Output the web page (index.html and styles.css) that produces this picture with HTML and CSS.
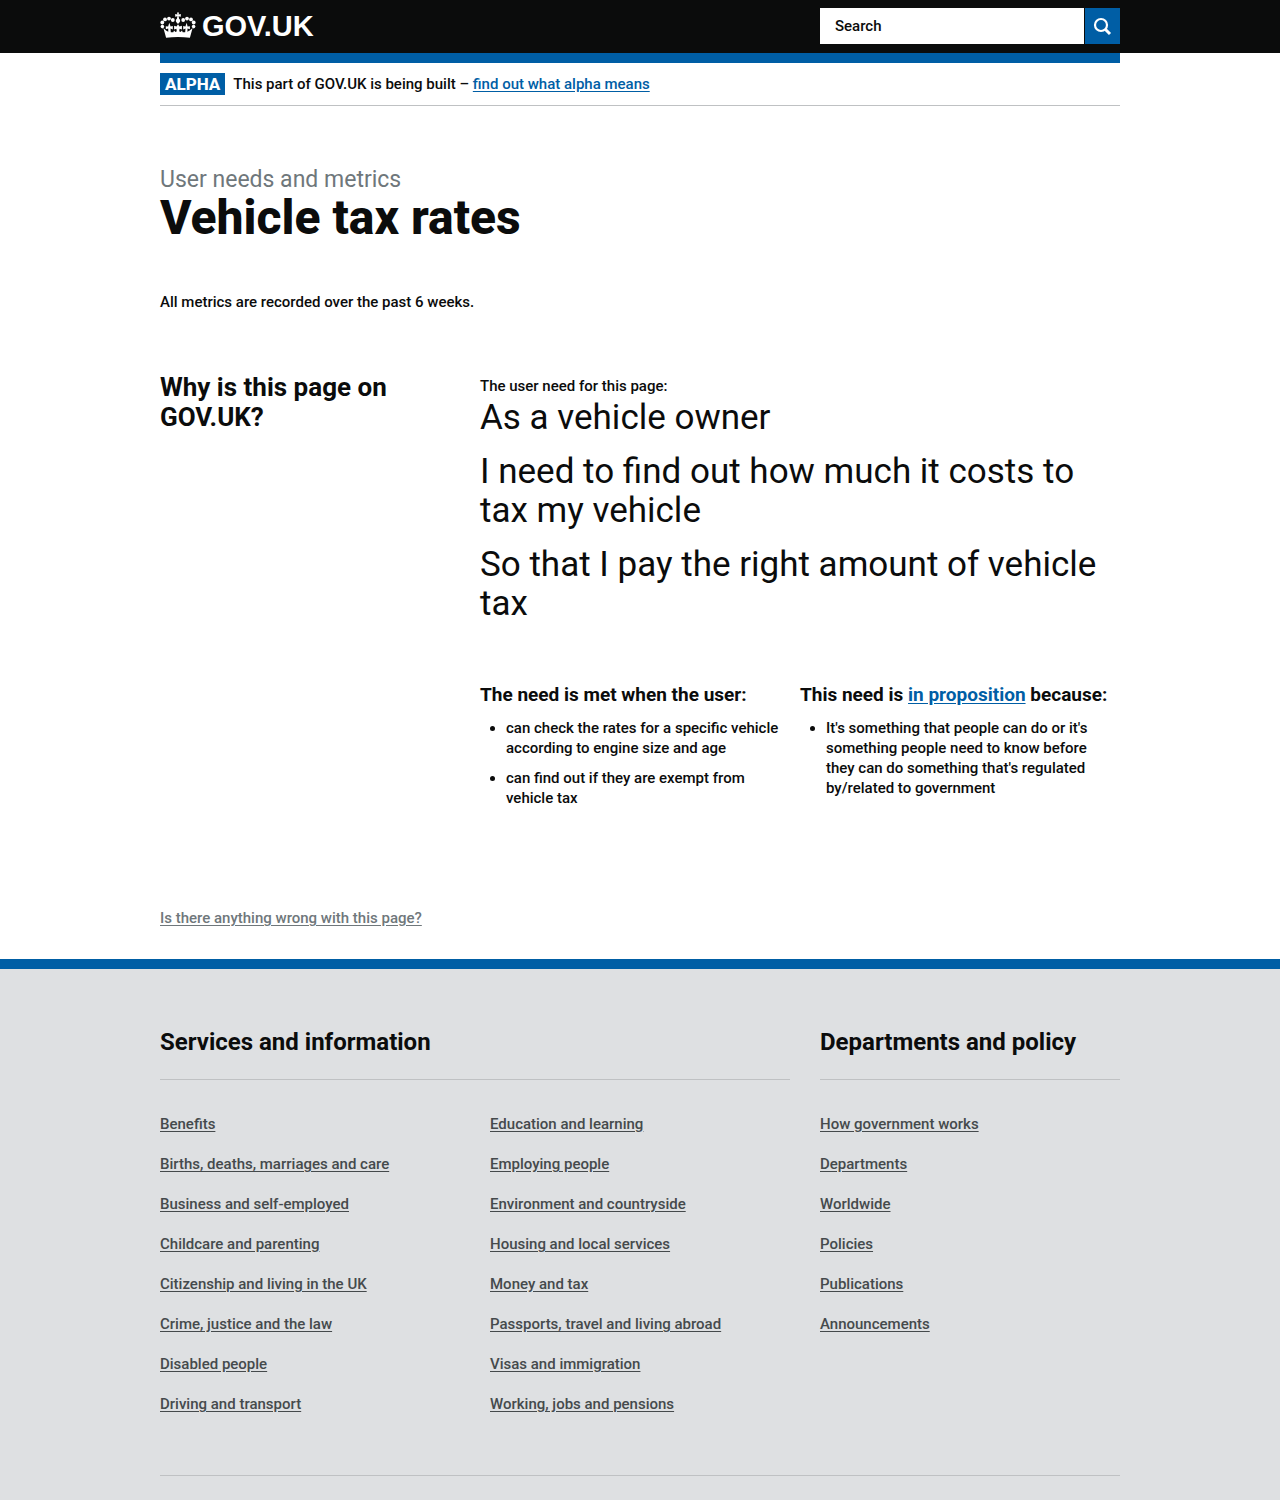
FILE: index.html
```html
<!DOCTYPE html>
<html lang="en">
<head>
<meta charset="utf-8">
<title>Vehicle tax rates - GOV.UK</title>
<meta name="viewport" content="width=device-width, initial-scale=1">
<link rel="stylesheet" href="styles.css">
</head>
<body>
<header class="site-header">
  <div class="wrap site-header__inner">
    <a class="logo" href="#">
      <svg class="logo__crown" viewBox="0 0 36 28" width="36" height="28" aria-hidden="true">
        <g fill="#fff">
          <path d="M17 .6h2l-.4 2 2.200-.5v2.600l-2.200-.5.5 2.600c1.300.6 1.500 2.700.3 3.700L18 12l-1.400-1.500c-1.200-1-1-3.100.3-3.700l.5-2.600-2.200.5V2.100l2.200.5z"/>
          <circle cx="12.800" cy="8" r="1.900"/><circle cx="9" cy="6.600" r="1.900"/><circle cx="5" cy="7.400" r="1.900"/><circle cx="2.300" cy="10.500" r="1.900"/><circle cx="2.400" cy="14.600" r="1.800"/>
          <circle cx="23.200" cy="8" r="1.900"/><circle cx="27" cy="6.600" r="1.900"/><circle cx="31" cy="7.400" r="1.900"/><circle cx="33.700" cy="10.500" r="1.900"/><circle cx="33.600" cy="14.600" r="1.800"/>
          <path d="m9.300 10.800 1.300 3.800 2.200-.6v3.400l-2.300-.8.3 3.600h2.500l.7-1.600 1.500 1.300 1.300-.6-.4-2.600-2.300.7v-3.600l2.400.7L18 12.200l1.500 2.300 2.400-.7v3.600l-2.300-.7-.4 2.600 1.300.6 1.500-1.300.7 1.600h2.500l.3-3.600-2.300.8V14l2.200.6 1.300-3.800.9 3.600 2.300-.2v3l-2.400-.8-.1 3.300 2.300-1.300 2.900-2.500-2.700 9.800c-7.800-1-16-1-23.800 0l-2.700-9.800L6 18.400l2.300 1.300-.1-3.300-2.400.8v-3l2.300.2z"/>
        </g>
      </svg>
      <span class="logo__text">GOV.UK</span>
    </a>
    <form class="search" role="search">
      <input class="search__input" type="search" aria-label="Search" placeholder="Search">
      <button class="search__button" type="submit" aria-label="Search">
        <svg viewBox="0 0 36 36" width="36" height="36" fill="none" stroke="#fff" aria-hidden="true"><circle cx="16" cy="17" r="6" stroke-width="2.200"/><path d="m20.500 21.500 4.500 4.500" stroke-width="3"/></svg>
      </button>
    </form>
  </div>
</header>
<div class="wrap">
  <div class="phase">
    <strong class="phase__tag">ALPHA</strong>
    <span>This part of GOV.UK is being built – <a href="#">find out what alpha means</a></span>
  </div>
  <main>
    <header class="title">
      <p class="title__context">User needs and metrics</p>
      <h1 class="title__heading">Vehicle tax rates</h1>
    </header>
    <p>All metrics are recorded over the past 6 weeks.</p>
    <section class="why">
      <h2 class="why__heading">Why is this page on GOV.UK?</h2>
      <div class="why__body">
        <p>The user need for this page:</p>
        <div class="need">
          <p>As a vehicle owner</p>
          <p>I need to find out how much it costs to tax my vehicle</p>
          <p>So that I pay the right amount of vehicle tax</p>
        </div>
        <div class="reasons">
          <section>
            <h3 class="reasons__heading">The need is met when the user:</h3>
            <ul class="reasons__list">
              <li>can check the rates for a specific vehicle according to engine size and age</li>
              <li>can find out if they are exempt from vehicle tax</li>
            </ul>
          </section>
          <section>
            <h3 class="reasons__heading">This need is <a href="#">in proposition</a> because:</h3>
            <ul class="reasons__list">
              <li>It's something that people can do or it's something people need to know before they can do something that's regulated by/related to government</li>
            </ul>
          </section>
        </div>
      </div>
    </section>
    <p class="report"><a href="#">Is there anything wrong with this page?</a></p>
  </main>
</div>
<footer class="site-footer">
  <div class="wrap">
    <div class="site-footer__nav">
      <section class="links-group links-group--wide">
        <h2 class="links-group__heading">Services and information</h2>
        <ul class="links">
          <li><a href="#">Benefits</a></li>
          <li><a href="#">Births, deaths, marriages and care</a></li>
          <li><a href="#">Business and self-employed</a></li>
          <li><a href="#">Childcare and parenting</a></li>
          <li><a href="#">Citizenship and living in the UK</a></li>
          <li><a href="#">Crime, justice and the law</a></li>
          <li><a href="#">Disabled people</a></li>
          <li><a href="#">Driving and transport</a></li>
          <li><a href="#">Education and learning</a></li>
          <li><a href="#">Employing people</a></li>
          <li><a href="#">Environment and countryside</a></li>
          <li><a href="#">Housing and local services</a></li>
          <li><a href="#">Money and tax</a></li>
          <li><a href="#">Passports, travel and living abroad</a></li>
          <li><a href="#">Visas and immigration</a></li>
          <li><a href="#">Working, jobs and pensions</a></li>
        </ul>
      </section>
      <section class="links-group">
        <h2 class="links-group__heading">Departments and policy</h2>
        <ul class="links">
          <li><a href="#">How government works</a></li>
          <li><a href="#">Departments</a></li>
          <li><a href="#">Worldwide</a></li>
          <li><a href="#">Policies</a></li>
          <li><a href="#">Publications</a></li>
          <li><a href="#">Announcements</a></li>
        </ul>
      </section>
    </div>
  </div>
</footer>
</body>
</html>
```
FILE: styles.css
```css
* { box-sizing: border-box; }

body {
  margin: 0;
  background: #fff;
  color: #0b0c0c;
  font: 500 15px/20px Roboto, "Liberation Sans", sans-serif;
}

h1, h2, h3, p, ul { margin: 0; }

a {
  color: #005ea5;
  text-underline-offset: 2px;
}

.wrap {
  max-width: 960px;
  margin: 0 auto;
}

.site-header { background: #0b0c0c; }

.site-header__inner {
  display: flex;
  justify-content: space-between;
  align-items: flex-start;
  padding: 8px 0 9px;
}

.logo {
  display: flex;
  align-items: center;
  gap: 6px;
  height: 36px;
  color: #fff;
  text-decoration: none;
}

.logo__text {
  font: 700 29px/36px "Liberation Sans", Arial, sans-serif;
}

.search {
  display: flex;
  gap: 1px;
  width: 300px;
}

.search__input {
  flex: 1;
  min-width: 0;
  height: 36px;
  padding: 0 15px;
  border: 0;
  border-radius: 0;
  background: #fff;
  color: #0b0c0c;
  font: inherit;
}

.search__input::placeholder { color: #0b0c0c; }

.search__button {
  width: 35px;
  height: 36px;
  padding: 0;
  border: 0;
  background: #005ea5;
}

.search__button svg { display: block; }

.phase {
  display: flex;
  align-items: center;
  gap: 8px;
  padding: 10px 0;
  border-top: 10px solid #005ea5;
  border-bottom: 1px solid #bfc1c3;
}

.phase__tag {
  padding: 1px 5px;
  background: #005ea5;
  color: #fff;
  font-size: 17px;
  font-weight: 800;
}

.title { padding: 59px 0 50px; }

.title__context {
  color: #6f777b;
  font-size: 23px;
  font-weight: 400;
  line-height: 29px;
}

.title__heading {
  font-size: 48px;
  font-weight: 800;
  line-height: 48px;
}

.why {
  display: grid;
  grid-template-columns: 1fr 2fr;
  padding-top: 60px;
}

.why__heading {
  padding-right: 60px;
  font-size: 26px;
  line-height: 30px;
}

.why__body { padding-top: 4px; }

.need {
  padding-top: 2px;
  font-size: 35px;
  font-weight: 400;
  line-height: 39px;
}

.need p { padding-bottom: 15px; }

.reasons {
  display: grid;
  grid-template-columns: 1fr 1fr;
  padding-top: 45px;
}

.reasons__heading {
  font-size: 19px;
  line-height: 24px;
}

.reasons__list {
  padding: 11px 15px 0 26px;
}

.reasons__list li { margin-bottom: 10px; }

.report { padding: 90px 0 31px; }

.report a { color: #6f777b; }

.site-footer {
  border-top: 10px solid #005ea5;
  background: #dee0e2;
}

.site-footer__nav {
  display: grid;
  grid-template-columns: 630fr 300fr;
  gap: 30px;
  padding: 58px 0 41px;
  border-bottom: 1px solid #bfc1c3;
}

.site-footer .wrap { padding-bottom: 24px; }

.links-group__heading {
  padding-bottom: 22px;
  border-bottom: 1px solid #bfc1c3;
  font-size: 24px;
  line-height: 30px;
}

.links {
  padding: 34px 0 0;
  list-style: none;
}

.links-group--wide .links {
  columns: 2;
  column-gap: 30px;
}

.links li {
  padding-bottom: 20px;
  break-inside: avoid;
}

.links a { color: #454a4c; }
```
